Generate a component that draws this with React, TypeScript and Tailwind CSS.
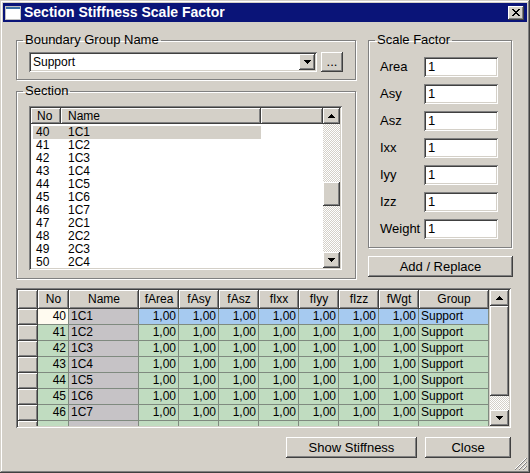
import type { ReactNode } from 'react';

/* Win2000 style bevels */
const raised = 'shadow-[inset_-1px_-1px_#404040,inset_1px_1px_#ffffff,inset_-2px_-2px_#808080,inset_2px_2px_#d4d0c8]';
const headerBevel = 'shadow-[inset_-1px_-1px_#404040,inset_1px_1px_#ffffff,inset_-2px_-2px_#808080]';
const sunken = 'shadow-[inset_1px_1px_#808080,inset_-1px_-1px_#ffffff,inset_2px_2px_#404040,inset_-2px_-2px_#d4d0c8]';
const dither = 'bg-[image:repeating-conic-gradient(#ffffff_0_25%,#d4d0c8_0_50%)] bg-[length:2px_2px]';

const sections = [
  ['40', '1C1'], ['41', '1C2'], ['42', '1C3'], ['43', '1C4'], ['44', '1C5'], ['45', '1C6'],
  ['46', '1C7'], ['47', '2C1'], ['48', '2C2'], ['49', '2C3'], ['50', '2C4'],
];

const factors = ['Area', 'Asy', 'Asz', 'Ixx', 'Iyy', 'Izz', 'Weight'];
const valueCols = ['fArea', 'fAsy', 'fAsz', 'fIxx', 'fIyy', 'fIzz', 'fWgt'];

/* pixel triangle for scroll / combo buttons */
function Arrow({ up }: { up?: boolean }) {
  const rows = [0, 1, 2, 3];
  return (
    <svg width="7" height="4" viewBox="0 0 7 4" shapeRendering="crispEdges">
      {rows.map((i) => (
        <rect key={i} x={i} y={up ? 3 - i : i} width={7 - i * 2} height="1" fill="#000" />
      ))}
    </svg>
  );
}

function CloseGlyph() {
  const px: [number, number][] = [];
  const rows = ['xx....xx', '.xx..xx.', '..xxxx..', '...xx...', '..xxxx..', '.xx..xx.', 'xx....xx'];
  rows.forEach((r, y) => r.split('').forEach((c, x) => { if (c === 'x') px.push([x, y]); }));
  return (
    <svg width="8" height="7" viewBox="0 0 8 7" shapeRendering="crispEdges">
      {px.map(([x, y]) => <rect key={`${x}-${y}`} x={x} y={y} width="1" height="1" fill="#000" />)}
    </svg>
  );
}

function WinIcon() {
  return (
    <svg width="16" height="14" viewBox="0 0 16 14" shapeRendering="crispEdges">
      <rect x="0" y="0" width="16" height="14" fill="#ffffff" />
      <rect x="0" y="0" width="16" height="3" fill="#3a6ea5" />
      <rect x="0.5" y="0.5" width="15" height="13" fill="none" stroke="#c0c0c0" />
    </svg>
  );
}

function Grip() {
  return (
    <svg width="12" height="12" viewBox="0 0 12 12" className="absolute bottom-[3px] right-[3px]">
      <path d="M11 0L0 11M11 4L4 11M11 8L8 11" stroke="#ffffff" />
      <path d="M12 0L0 12M12 4L4 12M12 8L8 12" stroke="#808080" />
    </svg>
  );
}

function GroupBox({ title, className, children }: { title: string; className: string; children: ReactNode }) {
  return (
    <fieldset className={`border border-[#808080] shadow-[inset_1px_1px_#ffffff,1px_1px_#ffffff] ${className}`}>
      <legend className="ml-[6px] px-[2px] text-[13px] leading-[14px]">{title}</legend>
      {children}
    </fieldset>
  );
}

function Button({ label, className }: { label: string; className: string }) {
  return (
    <button type="button" className={`flex items-center justify-center bg-[#d4d0c8] text-[13px] ${raised} ${className}`}>
      {label}
    </button>
  );
}

function ScrollBtn({ up, className }: { up?: boolean; className: string }) {
  return (
    <div className={`flex shrink-0 items-center justify-center bg-[#d4d0c8] ${raised} ${className}`}>
      <Arrow up={up} />
    </div>
  );
}

function SectionList() {
  return (
    <div className={`flex h-[164px] w-[313px] bg-white p-[2px] ${sunken}`}>
      <div className="flex min-w-0 flex-1 flex-col overflow-hidden">
        <div className="flex h-[16px] shrink-0 text-[12px] leading-[16px]">
          <div className={`w-[30px] bg-[#d4d0c8] pl-[6px] ${headerBevel}`}>No</div>
          <div className={`w-[200px] bg-[#d4d0c8] pl-[7px] ${headerBevel}`}>Name</div>
          <div className={`flex-1 bg-[#d4d0c8] ${headerBevel}`} />
        </div>
        <div className="flex flex-col pt-[2px] text-[12px] leading-[13px]">
          {sections.map(([no, name], i) => (
            <div key={no} className={`ml-[2px] flex h-[13px] w-[228px] ${i === 0 ? 'bg-[#d4d0c8]' : ''}`}>
              <span className="w-[35px] pl-[3px]">{no}</span>
              <span>{name}</span>
            </div>
          ))}
        </div>
      </div>
      <div className="flex w-[17px] flex-col">
        <ScrollBtn up className="h-[16px]" />
        <div className={`flex flex-1 flex-col ${dither}`}>
          <div className={`mt-[58px] h-[24px] bg-[#d4d0c8] ${raised}`} />
        </div>
        <ScrollBtn className="h-[16px]" />
      </div>
    </div>
  );
}

function Grid() {
  /* last row is only partly visible, its text is scrolled out of view */
  const rows = ['40', '41', '42', '43', '44', '45', '46', ''];
  const names = ['1C1', '1C2', '1C3', '1C4', '1C5', '1C6', '1C7', ''];
  const line = 'border-r border-b border-[#7f8a7f]';
  return (
    <div className={`ml-[16px] mt-[9px] flex h-[140px] w-[495px] bg-[#d4d0c8] p-[2px] ${sunken}`}>
      <div className="flex w-[471px] flex-col overflow-hidden text-[12px]">
        <div className="flex h-[19px] shrink-0 leading-[19px]">
          <div className={`w-[20px] ${headerBevel}`} />
          <div className={`w-[31px] text-center ${headerBevel}`}>No</div>
          <div className={`w-[70px] text-center ${headerBevel}`}>Name</div>
          {valueCols.map((c) => (
            <div key={c} className={`w-[40px] text-center ${headerBevel}`}>{c}</div>
          ))}
          <div className={`w-[70px] text-center ${headerBevel}`}>Group</div>
        </div>
        {rows.map((no, i) => {
          const sel = i === 0;
          const filled = no !== '';
          const cell = sel ? 'bg-[#a6caf0]' : 'bg-[#c0dcc0]';
          return (
            <div key={i} className="flex h-[16px] shrink-0 leading-[15px]">
              <div className={`w-[20px] ${raised}`} />
              <div className={`w-[31px] pr-[2px] text-right ${line} ${sel ? 'bg-[#fffbf0]' : 'bg-[#c0dcc0]'}`}>{no}</div>
              <div className={`w-[70px] bg-[#c6c3c6] pl-[2px] ${line}`}>{names[i]}</div>
              {valueCols.map((c) => (
                <div key={c} className={`w-[40px] pr-[2px] text-right ${line} ${cell}`}>{filled ? '1,00' : ''}</div>
              ))}
              <div className={`w-[70px] pl-[2px] ${line} ${cell}`}>{filled ? 'Support' : ''}</div>
            </div>
          );
        })}
      </div>
      <div className="ml-[1px] flex w-[19px] flex-col">
        <ScrollBtn up className="h-[16px]" />
        <div className={`h-[90px] shrink-0 bg-[#d4d0c8] ${raised}`} />
        <div className={`flex-1 ${dither}`} />
        <ScrollBtn className="h-[16px]" />
      </div>
    </div>
  );
}

export default function App() {
  return (
    <div className="relative flex h-[473px] w-[530px] flex-col bg-[#d4d0c8] font-['Liberation_Sans',Arial,sans-serif] text-black shadow-[inset_-1px_-1px_#404040,inset_1px_1px_#d4d0c8,inset_-2px_-2px_#808080,inset_2px_2px_#ffffff]">
      <div className="mx-[3px] mt-[3px] flex h-[19px] items-center bg-[#0a1478] pl-[2px] pr-[3px]">
        <WinIcon />
        <span className="ml-[3px] text-[14px] font-bold leading-[19px] text-white">Section Stiffness Scale Factor</span>
        <div className={`ml-auto flex h-[14px] w-[16px] items-center justify-center bg-[#d4d0c8] ${raised}`}>
          <CloseGlyph />
        </div>
      </div>

      <div className="ml-[16px] mt-[11px] flex gap-[12px]">
        <div className="flex flex-col">
          <GroupBox title="Boundary Group Name" className="h-[47px] w-[340px]">
            <div className="flex gap-[4px] pl-[12px] pt-[5px]">
              <div className={`flex h-[20px] w-[288px] items-center bg-white p-[2px] ${sunken}`}>
                <span className="flex-1 pl-[2px] text-[12px]">Support</span>
                <ScrollBtn className="h-[16px] w-[16px]" />
              </div>
              <Button label="..." className="h-[20px] w-[22px]" />
            </div>
          </GroupBox>
          <GroupBox title="Section" className="mt-[4px] h-[195px] w-[340px]">
            <div className="pl-[12px] pt-[8px]">
              <SectionList />
            </div>
          </GroupBox>
        </div>

        <div className="flex flex-col">
          <GroupBox title="Scale Factor" className="h-[215px] w-[144px]">
            <div className="flex flex-col gap-[7px] pl-[11px] pt-[10px]">
              {factors.map((f) => (
                <div key={f} className="flex h-[20px] items-center">
                  <span className="w-[44px] text-[13px]">{f}</span>
                  <div className={`h-[20px] w-[74px] bg-white pl-[4px] text-[13px] leading-[20px] ${sunken}`}>1</div>
                </div>
              ))}
            </div>
          </GroupBox>
          <Button label="Add / Replace" className="mt-[8px] h-[21px] w-[145px]" />
        </div>
      </div>

      <Grid />

      <div className="mt-[9px] flex justify-end gap-[8px] pr-[19px]">
        <Button label="Show Stiffness" className="h-[21px] w-[131px]" />
        <Button label="Close" className="h-[21px] w-[86px]" />
      </div>

      <Grip />
    </div>
  );
}
